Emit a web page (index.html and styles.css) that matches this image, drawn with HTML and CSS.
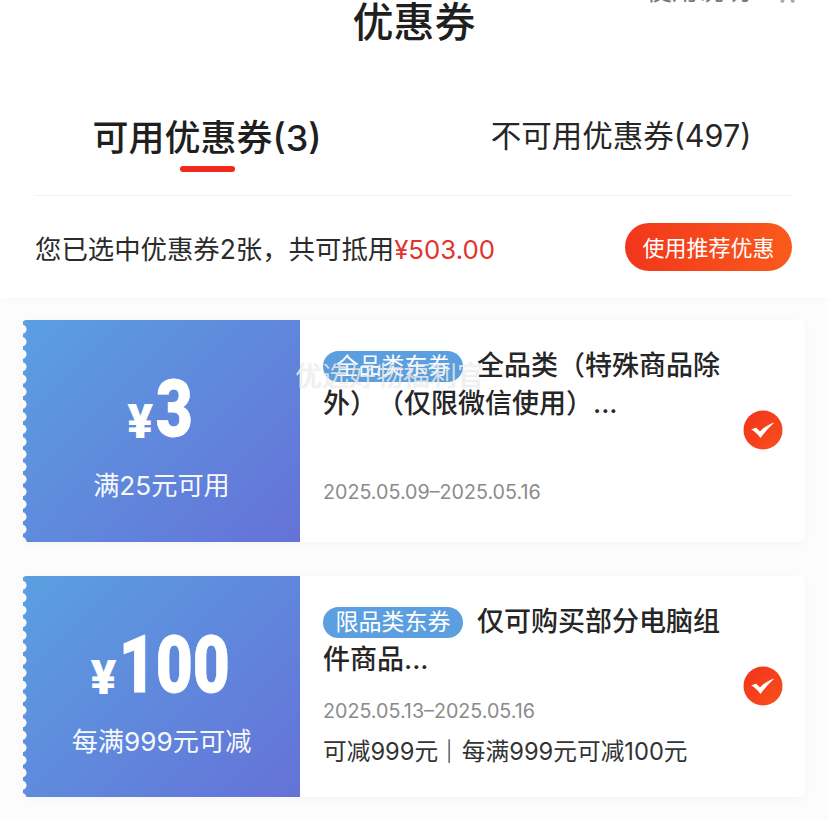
FILE: index.html
```html
<!DOCTYPE html>
<html lang="zh-CN">
<head>
<meta charset="utf-8">
<title>优惠券</title>
<link rel="stylesheet" href="styles.css">
</head>
<body>
<div class="page">
  <header class="head">
    <div class="nav">
      <span></span>
      <h1 class="title">优惠券</h1>
      <div class="help"><span>使用说明</span><span class="dots">• •</span></div>
    </div>
    <div class="tabs">
      <div class="tab active">可用优惠券(3)<i class="bar"></i></div>
      <div class="tab">不可用优惠券(497)</div>
    </div>
    <div class="divider"></div>
    <div class="summary">
      <p class="sum-text">您已选中优惠券2张，共可抵用<em>¥503.00</em></p>
      <button class="rec">使用推荐优惠</button>
    </div>
  </header>

  <main class="list">
    <article class="card">
      <div class="left">
        <div class="amount"><span class="yen">¥</span><span class="num">3</span></div>
        <div class="cond">满25元可用</div>
      </div>
      <div class="right">
        <div class="info">
          <div class="name"><span class="tag">全品类东券</span>全品类（特殊商品除外）（仅限微信使用）...</div>
          <div class="meta"><div class="date">2025.05.09–2025.05.16</div></div>
        </div>
        <svg class="check" viewBox="0 0 40 40" aria-hidden="true"><defs><linearGradient id="g1" x1="0" y1="0" x2="1" y2="1"><stop offset="0" stop-color="#f2321e"/><stop offset="1" stop-color="#f9501a"/></linearGradient></defs><circle cx="20" cy="20" r="19.5" fill="url(#g1)"/><path d="M8.500 19.500 L13 17.500 L17 21.500 C21 17 25.500 14.500 31.500 12.500 C26 17.500 21.500 22.500 17.500 28 C15 24.500 12 21.500 8.500 19.500 Z" fill="#fff"/></svg>
      </div>
    </article>

    <article class="card">
      <div class="left">
        <div class="amount"><span class="yen">¥</span><span class="num">100</span></div>
        <div class="cond">每满999元可减</div>
      </div>
      <div class="right">
        <div class="info">
          <div class="name"><span class="tag">限品类东券</span>仅可购买部分电脑组件商品...</div>
          <div class="meta"><div class="date">2025.05.13–2025.05.16</div><div class="desc">可减999元<span class="sep">｜</span>每满999元可减100元</div></div>
        </div>
        <svg class="check" viewBox="0 0 40 40" aria-hidden="true"><circle cx="20" cy="20" r="19.5" fill="url(#g1)"/><path d="M8.500 19.500 L13 17.500 L17 21.500 C21 17 25.500 14.500 31.500 12.500 C26 17.500 21.500 22.500 17.500 28 C15 24.500 12 21.500 8.500 19.500 Z" fill="#fff"/></svg>
      </div>
    </article>
  </main>
  <div class="mark">优选好物福利官</div>
</div>
</body>
</html>
```

FILE: styles.css
```css
* { box-sizing: border-box; }
html, body { margin: 0; height: 100%; }
body {
  background: #fcfcfc;
  overflow: hidden;
  font-family: "Inter", "Noto Sans CJK SC", sans-serif;
  color: #222;
  text-spacing-trim: space-all;
}
.page { position: relative; width: 828px; height: 820px; overflow: hidden; }

.head {
  background: #fff;
  height: 298px;
  box-shadow: 0 2px 6px rgba(0,0,0,.02);
}
.nav {
  display: grid;
  grid-template-columns: 1fr auto 1fr;
  height: 44px;
}
.title {
  margin: 0;
  font-size: 41px;
  line-height: 44px;
  font-weight: 500;
  color: #1f1f1f;
}
.help {
  display: flex;
  justify-content: flex-end;
  align-items: flex-end;
  gap: 25px;
  margin-top: -24px;
  padding-right: 28px;
  height: 30px;
  font-size: 26px;
  line-height: 30px;
  color: #777;
}
.dots { width: 25px; text-align: center; font-size: 12px; line-height: 12px; color: #aaa; }

.tabs {
  display: grid;
  grid-template-columns: 414px 414px;
  padding-top: 69px;
  height: 151px;
}
.tab {
  position: relative;
  text-align: center;
  white-space: nowrap;
  color: #262626;
  font-size: 30.500px;
  line-height: 44px;
  margin-top: 1px;
}
.tab.active {
  font-size: 36px;
  line-height: 50px;
  font-weight: 500;
  color: #1f1f1f;
  margin-top: 0;
}
.tab .bar {
  position: absolute;
  left: 180px;
  top: 53px;
  width: 55px;
  height: 6px;
  border-radius: 3px;
  background: #ef2a1a;
}
.divider { height: 1px; margin: 0 36px 0 34px; background: #f3f3f3; }

.summary {
  display: flex;
  align-items: center;
  justify-content: space-between;
  height: 102px;
  padding: 0 36px 4px 35px;
  margin-top: 2px;
}
.sum-text { margin: 0; padding-top: 4px; font-size: 26.400px; line-height: 34px; color: #2b2b2b; white-space: nowrap; }
.sum-text em { font-style: normal; font-size: 25.800px; color: #e2342c; }
.rec {
  width: 167px;
  height: 48px;
  border: 0;
  border-radius: 24px;
  background: linear-gradient(90deg, #f2361c, #fa5a1c);
  color: #fff;
  font: inherit;
  font-size: 22px;
  white-space: nowrap;
  padding: 0 0 2px;
}

.list {
  display: flex;
  flex-direction: column;
  gap: 34px;
  padding: 22px 23px 0;
}
.card {
  display: flex;
  height: 221.500px;
  background: #fff;
  border-radius: 6px;
  box-shadow: 0 2px 8px rgba(0,0,0,.03);
}
.left {
  position: relative;
  width: 277px;
  flex: none;
  background: linear-gradient(135deg, #5a9fe0, #6572d8);
  color: #fff;
  text-align: center;
  padding-top: 53px;
}
.left::before {
  content: "";
  position: absolute;
  left: 0;
  top: 0;
  bottom: 0;
  width: 5px;
  background: radial-gradient(circle at -1px 50%, #fcfcfc 4.300px, transparent 4.800px) 0 3px / 5px 12.500px repeat-y;
}
.amount {
  display: flex;
  justify-content: center;
  align-items: flex-end;
  height: 76px;
  transform: scaleX(.8);
}
.yen {
  display: inline-block;
  font-family: "Roboto", sans-serif;
  font-weight: 900;
  font-size: 48px;
  line-height: 50px;
  margin: 0 6px 2px 0;
  transform: scaleX(1.25);
}
.num {
  font-family: "Roboto", sans-serif;
  font-weight: 900;
  font-size: 80px;
  line-height: 74px;
  margin-bottom: 3px;
  -webkit-text-stroke: .8px #fff;
}
.cond { margin-top: 19px; font-size: 26.200px; line-height: 36px; opacity: .95; white-space: nowrap; }

.right {
  flex: 1;
  display: flex;
  align-items: center;
  padding-left: 23px;
  padding-right: 22px;
}
.info {
  flex: 1;
  height: 100%;
  display: flex;
  flex-direction: column;
  padding: 27px 0 35px;
  min-width: 0;
}
.name {
  font-size: 27px;
  line-height: 38px;
  font-weight: 500;
  color: #262626;
  width: 402px;
}
.tag {
  display: inline-block;
  width: 140px;
  height: 31px;
  margin-right: 14px;
  border-radius: 16px;
  background: #5b9fe0;
  color: #fff;
  font-size: 23px;
  line-height: 31px;
  font-weight: 400;
  text-align: center;
  vertical-align: 1px;
}
.meta { margin-top: auto; }
.date { font-size: 19.700px; line-height: 30px; color: #8b8b8b; white-space: nowrap; }
.desc { margin-top: 16px; font-size: 23.700px; line-height: 20px; color: #333; white-space: nowrap; }
.sep { font-weight: 500; color: #222; margin-inline: -1px 1px; }
.check { width: 40px; height: 40px; flex: none; margin-top: -1px; }

.mark {
  position: absolute;
  left: 295px;
  top: 359px;
  font-size: 27px;
  line-height: 36px;
  color: rgba(255,255,255,.75);
  text-shadow: 0 0 1px rgba(0,0,0,.22);
  white-space: nowrap;
  pointer-events: none;
}
```
